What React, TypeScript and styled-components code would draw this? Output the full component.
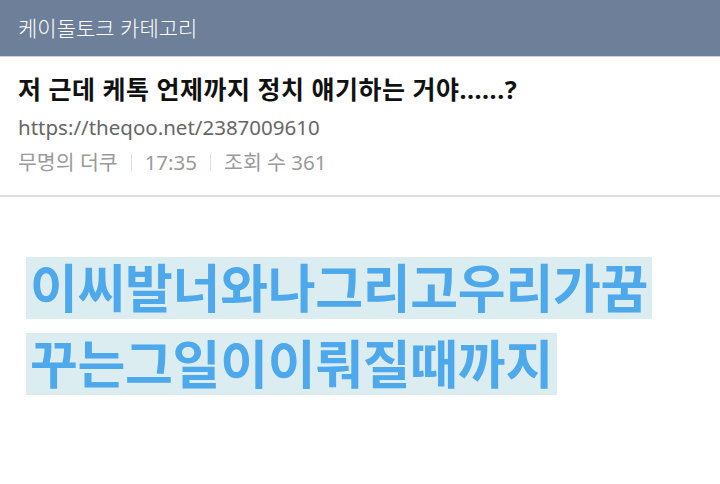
import * as React from "react";
import styled, { createGlobalStyle } from "styled-components";

const FONT = `"Noto Sans", "Noto Sans CJK KR", sans-serif`;

const GlobalStyle = createGlobalStyle`
  html, body {
    margin: 0;
    padding: 0;
    background: #fff;
  }
  body {
    font-family: ${FONT};
  }
`;

const LINES = ["이씨발너와나그리고우리가꿈", "꾸는그일이이뤄질때까지"];

const App = () => {
  return (
    <Page>
      <GlobalStyle />
      <TopBar>케이돌토크 카테고리</TopBar>
      <PostHead>
        <Title>저 근데 케톡 언제까지 정치 얘기하는 거야......?</Title>
        <Url>https://theqoo.net/2387009610</Url>
        <Meta>
          <span>무명의 더쿠</span>
          <Divider />
          <span>17:35</span>
          <Divider />
          <span>조회 수 361</span>
        </Meta>
      </PostHead>
      <Body>
        {LINES.map((line) => (
          <Highlight key={line}>{line}</Highlight>
        ))}
      </Body>
    </Page>
  );
};

const Page = styled.div`
  width: 720px;
  height: 484px;
  overflow: hidden;
  background: #fff;
`;

const TopBar = styled.div`
  height: 57px;
  box-sizing: border-box;
  padding: 0 0 2px 18px;
  display: flex;
  align-items: center;
  background: #6e7f99;
  border-bottom: 1px solid #c6d3dc;
  color: #fff;
  font-size: 21px;
  font-weight: 300;
`;

const PostHead = styled.div`
  height: 140px;
  box-sizing: border-box;
  padding: 15px 18px 0;
  border-bottom: 2px solid #dedede;
`;

const Title = styled.h1`
  margin: 0;
  font-size: 25px;
  font-weight: 700;
  line-height: 34px;
  color: #111;
  letter-spacing: 0.5px;
`;

const Url = styled.div`
  margin-top: 6px;
  font-size: 20.5px;
  line-height: 30px;
  color: #666;
`;

const Meta = styled.div`
  margin-top: 5px;
  display: flex;
  align-items: center;
  gap: 13px;
  font-size: 20.5px;
  line-height: 30px;
  color: #9a9a9a;
`;

const Divider = styled.i`
  width: 1px;
  height: 17px;
  background: #ddd;
`;

const Body = styled.div`
  padding: 60px 0 0 26px;
  display: flex;
  flex-direction: column;
  align-items: flex-start;
  gap: 14px;
`;

const Highlight = styled.div`
  height: 62px;
  line-height: 62px;
  padding: 0 4px;
  background: #dcedf1;
  color: #4ea8ec;
  font-size: 52px;
  font-weight: 700;
  letter-spacing: -0.3px;
  white-space: nowrap;
`;

export default App;
